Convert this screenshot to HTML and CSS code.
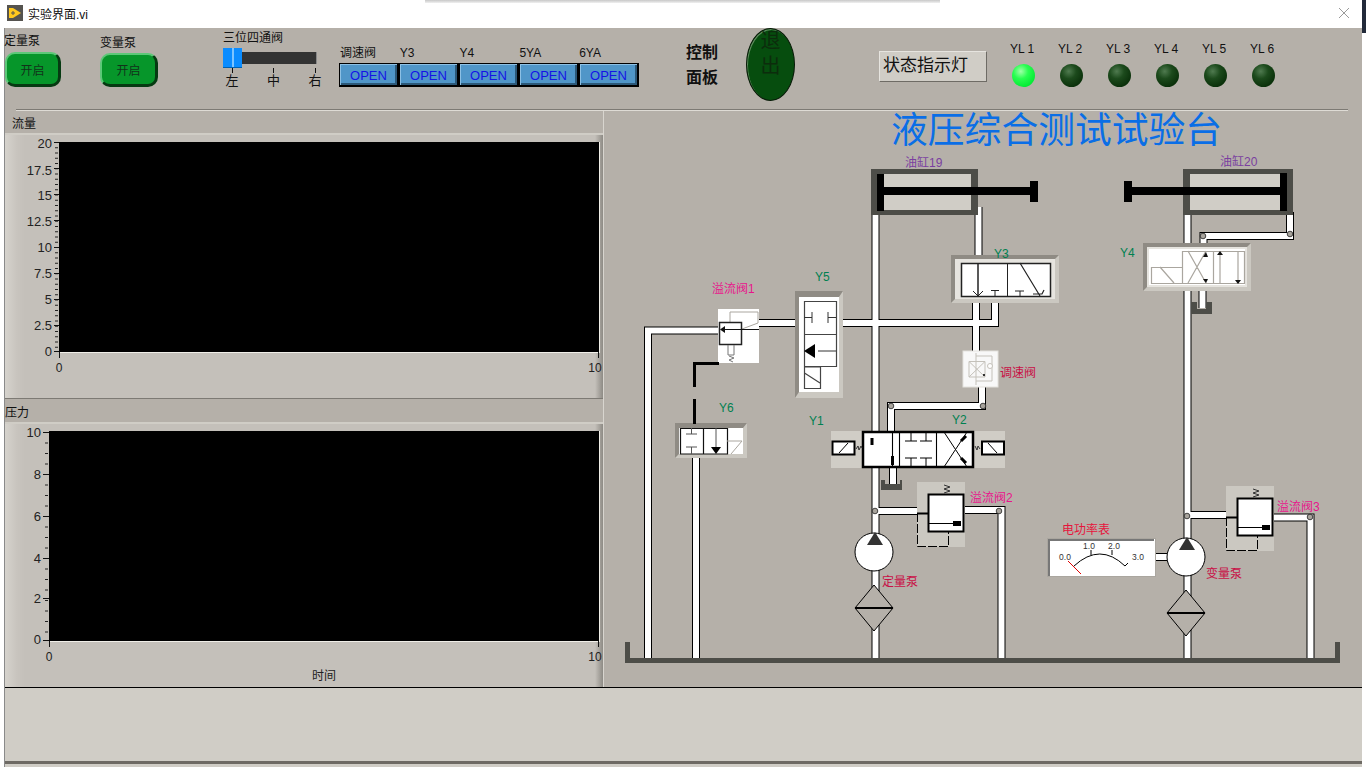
FILE: index.html
```html
<!DOCTYPE html>
<html lang="zh">
<head>
<meta charset="utf-8">
<title>实验界面.vi</title>
<link rel="stylesheet" href="styles.css">
</head>
<body>
<div class="window">
  <div class="titlebar">
    <svg class="app-icon" width="16" height="16" viewBox="0 0 16 16"><rect width="16" height="16" fill="#55534f"/><path d="M2 3H6L14 8L6 13H2Z" fill="#ffc81e"/><path d="M4 8H8M6 6V10" stroke="#55534f" stroke-width="1"/></svg>
    <span class="title-text">实验界面.vi</span>
    <svg class="close-icon" width="10" height="10" viewBox="0 0 10 10"><path d="M0 0L10 10M10 0L0 10" stroke="#9a9a9a" stroke-width="1"/></svg>
  </div>
  <div class="menu-shadow"></div>
  <div class="edge-corner"></div>

  <main class="vi">
    <section class="toolbar">
      <div class="toolrow">
        <div class="pump pump-a">
          <div class="lbl">定量泵</div>
          <button class="green-btn">开启</button>
        </div>
        <div class="pump pump-b">
          <div class="lbl">变量泵</div>
          <button class="green-btn">开启</button>
        </div>
        <div class="slider-group">
          <div class="lbl">三位四通阀</div>
          <div class="slider"><div class="thumb"></div><div class="track"></div></div>
          <div class="ticks"><span>左</span><span>中</span><span>右</span></div>
        </div>
        <div class="valves">
          <div class="valve-labels"><span>调速阀</span><span>Y3</span><span>Y4</span><span>5YA</span><span>6YA</span></div>
          <div class="valve-btns"><button>OPEN</button><button>OPEN</button><button>OPEN</button><button>OPEN</button><button>OPEN</button></div>
        </div>
        <div class="panel-name">控制<br>面板</div>
        <button class="exit-btn">退<br>出</button>
        <div class="status-box">状态指示灯</div>
        <div class="leds">
          <div class="led-cell"><span>YL 1</span><i class="led on"></i></div>
          <div class="led-cell"><span>YL 2</span><i class="led"></i></div>
          <div class="led-cell"><span>YL 3</span><i class="led"></i></div>
          <div class="led-cell"><span>YL 4</span><i class="led"></i></div>
          <div class="led-cell"><span>YL 5</span><i class="led"></i></div>
          <div class="led-cell"><span>YL 6</span><i class="led"></i></div>
        </div>
      </div>
      <div class="separator"></div>
    </section>

    <section class="workspace">
      <div class="charts">
        <div class="chart chart-a">
          <div class="chart-title title-a">流量</div>
          <svg class="chart-body" width="598" height="263" viewBox="5 135 598 263">
            <rect x="59" y="142" width="541" height="211" fill="#f0eee8"/>
            <rect x="59" y="142" width="540" height="210" fill="#000"/>
            <line x1="56.5" y1="142" x2="56.5" y2="352" class="minor" stroke-dasharray="1 4.25"/>
            <path class="major" d="M54 142.500H59M54 168.500H59M54 194.500H59M54 220.500H59M54 247.500H59M54 273.500H59M54 299.500H59M54 325.500H59M54 351.500H59"/>
            <g class="axis-y">
              <text x="52" y="148">20</text><text x="52" y="175">17.5</text><text x="52" y="200">15</text><text x="52" y="226">12.5</text><text x="52" y="252">10</text><text x="52" y="278">7.5</text><text x="52" y="304">5</text><text x="52" y="330">2.5</text><text x="52" y="356">0</text>
            </g>
            <path class="major" d="M59.500 352V358M598.500 352V358"/>
            <g class="axis-x"><text x="59" y="372">0</text><text x="595" y="372">10</text></g>
          </svg>
        </div>
        <div class="chart chart-b">
          <div class="chart-title title-b">压力</div>
          <svg class="chart-body" width="598" height="263" viewBox="5 424 598 263">
            <rect x="49" y="431" width="551" height="211" fill="#f0eee8"/>
            <rect x="49" y="431" width="550" height="210" fill="#000"/>
            <line x1="46.5" y1="432" x2="46.5" y2="640" class="minor" stroke-dasharray="1 9.5"/>
            <path class="major" d="M43 432.500H49M43 474.500H49M43 516.500H49M43 558.500H49M43 598.500H49M43 640.500H49"/>
            <g class="axis-y">
              <text x="41" y="437">10</text><text x="41" y="479">8</text><text x="41" y="521">6</text><text x="41" y="563">4</text><text x="41" y="603">2</text><text x="41" y="644">0</text>
            </g>
            <path class="major" d="M49.500 641V647M598.500 641V647"/>
            <g class="axis-x"><text x="49" y="661">0</text><text x="595" y="661">10</text><text x="324" y="680">时间</text></g>
          </svg>
        </div>
      </div>

      <svg class="diagram" width="758" height="576" viewBox="604 111 758 576">
        <defs>
          <g id="pipes">
            <path d="M875.5 212V660"/>
            <path d="M978.5 207V262"/>
            <path d="M976 297V356"/>
            <path d="M982 385V406H891V435"/>
            <path d="M893 465V484"/>
            <path d="M759 323H995V297"/>
            <path d="M720 330.500H648V660"/>
            <path d="M696 455V660"/>
            <path d="M1187.500 212V660"/>
            <path d="M1290 212V236H1203.500V245"/>
            <path d="M1202.500 288V308"/>
            <path d="M875 511H920"/>
            <path d="M960 510H1001.500V660"/>
            <path d="M1187 515H1230"/>
            <path d="M1270 517.500H1310.500V660"/>
            <path d="M1150 557H1170"/>
          </g>
          <g id="pump">
            <circle cx="0" cy="0" r="19" fill="#fff" stroke="#000"/>
            <path d="M1 -20L-7 -7H9Z" fill="#333"/>
          </g>
          <g id="filter">
            <path d="M0 -23L19 0L0 23L-19 0Z" fill="#b5b0a9" stroke="#000"/>
            <path d="M-19 0H19" stroke="#000" stroke-width="2"/>
          </g>
          <g id="relief">
            <rect x="0" y="0" width="48" height="65" fill="#cbc8c1"/>
            <rect x="11.500" y="12.500" width="35" height="37" fill="#fff" stroke="#000" stroke-width="2"/>
            <path d="M12 41.500H44" stroke="#000"/>
            <path d="M36 39H44V44H36Z" fill="#000"/>
            <path d="M0 31.500H11" stroke="#000" stroke-width="2"/>
            <path d="M0.500 31V64.500H31.500V50" fill="none" stroke="#000" stroke-dasharray="9 2"/>
            <path d="M27 3L33 5L27 7L33 9L27 11" fill="none" stroke="#333"/>
          </g>
        </defs>

        <use href="#pipes" class="pipe-edge"/>
        <use href="#pipes" class="pipe-core"/>

        <text class="title-big" x="891" y="143">液压综合测试试验台</text>

        <!-- cylinder 19 -->
        <rect x="871" y="169" width="107" height="46" fill="#4d4d48"/>
        <rect x="884" y="174" width="87" height="36" fill="#d0cdc6"/>
        <rect x="877" y="174" width="7" height="37" fill="#000"/>
        <rect x="884" y="187" width="147" height="8" fill="#000"/>
        <rect x="1030" y="181" width="8" height="21" fill="#000"/>
        <!-- cylinder 20 -->
        <rect x="1183" y="169" width="110" height="46" fill="#4d4d48"/>
        <rect x="1190" y="174" width="90" height="36" fill="#d0cdc6"/>
        <rect x="1280" y="173" width="7" height="38" fill="#000"/>
        <rect x="1131" y="187" width="150" height="8" fill="#000"/>
        <rect x="1124" y="181" width="8" height="21" fill="#000"/>

        <!-- Y3 -->
        <rect x="951" y="255" width="108" height="48" fill="#cbc8c1"/>
        <path d="M951 255H1059L1055 259H955V299L951 303Z" fill="#8f8b84"/>
        <rect x="955" y="259" width="100" height="40" fill="#e6e4df"/>
        <rect x="961.500" y="263.500" width="89" height="33" fill="#fff" stroke="#222" stroke-width="1.500"/>
        <path d="M1007.500 263V297" stroke="#222"/>
        <path d="M978 263V296" stroke="#222" stroke-width="1.500"/>
        <path d="M973 291L978 296L983 291M991 290.500H999M995 290.500V297M1015 291H1024M1020 291V297" fill="none" stroke="#222"/>
        <path d="M1020 263L1040 296M1033 294H1042L1044 290" fill="none" stroke="#222" stroke-width="1.200"/>

        <!-- Y4 -->
        <rect x="1143" y="243" width="108" height="48" fill="#cbc8c1"/>
        <path d="M1143 243H1251L1247 247H1147V287L1143 291Z" fill="#8f8b84"/>
        <rect x="1147" y="247" width="100" height="40" fill="#e6e4df"/>
        <rect x="1149" y="249" width="96" height="36" fill="#fff"/>
        <path d="M1151.500 267.500H1182.500V283.500H1151.500ZM1182.500 251.500H1244.500V283.500H1182.500ZM1213.500 251.500V283.500M1160 267L1174 283M1188 251L1206 283M1206 251L1188 283M1220 252V283M1238 252V283" fill="none" stroke="#aaa69f" stroke-width="1.200"/>
        <path d="M1206 252L1203 257H1208ZM1206 283L1203 279H1208ZM1220 251L1217 255H1223ZM1238 284L1235 280H1241Z" fill="#111"/>

        <!-- tank Y4 -->
        <path d="M1191 302H1197V309H1206V302H1212V314H1191Z" fill="#4d4d48"/>

        <!-- relief 1 -->
        <rect x="718" y="309" width="41" height="54" fill="#fff"/>
        <path d="M730 322V312H758V323L742 329" fill="none" stroke="#aaa69f"/>
        <rect x="719.500" y="322.500" width="22" height="22" fill="#fff" stroke="#222" stroke-width="1.500"/>
        <path d="M722 329.500H759" stroke="#111" stroke-width="1.200"/>
        <path d="M720 329.500L725 326V333Z" fill="#111"/>
        <path d="M728 345V355M734 345V355M728 355H734M729 356L734 358L729 360L733 362" fill="none" stroke="#777" />

        <!-- Y5 -->
        <rect x="795" y="291" width="48" height="107" fill="#cbc8c1"/>
        <path d="M795 291H843L839 297H799V392L795 398Z" fill="#8f8b84"/>
        <rect x="799" y="297" width="40" height="95" fill="#fff"/>
        <path d="M804.500 301.500H836.500V366.500H804.500ZM804.500 334.500H836.500M804.500 367H820.500V388.500H804.500V367M804.500 373L820 383" fill="none" stroke="#444" stroke-width="1.200"/>
        <path d="M804 317.500H812M812 312V323M828 317.500H836M828 312V323M818 351H836" fill="none" stroke="#333"/>
        <path d="M804 351L815 344V358Z" fill="#000"/>

        <!-- Y6 -->
        <rect x="675" y="423" width="72" height="35" fill="#cbc8c1"/>
        <path d="M675 423H747L743 428H679V454L675 458Z" fill="#8f8b84"/>
        <rect x="679" y="428" width="64" height="26" fill="#fff"/>
        <path d="M680.500 428.500H727.500V454H680.500ZM703.500 428V454" fill="none" stroke="#111" stroke-width="1.200"/>
        <path d="M727 441H742M742 441L731 454" fill="none" stroke="#aaa69f"/>
        <path d="M686 434H697M691.500 428V434M686 447H697M691.500 447V454M716 428V448" fill="none" stroke="#555"/>
        <path d="M711 447H721L716 454Z" fill="#000"/>

        <!-- dashed pilot -->
        <path d="M719 363.500H694.500V387M694.500 399V424" fill="none" stroke="#000" stroke-width="3"/>

        <!-- speed valve -->
        <rect x="963" y="351" width="35" height="36" fill="#f8f8f8" stroke="#e4e2dd"/>
        <path d="M976 353V385M976 356H992V381H976M969 361.500H985V377H969ZM969 361.500L985 377M985 361.500L969 377" fill="none" stroke="#c4c1ba"/>
        <circle cx="990" cy="366" r="2.500" fill="#fff" stroke="#c4c1ba"/>
        <rect x="983" y="374" width="2" height="2" fill="#333"/>

        <!-- centre valve -->
        <rect x="831" y="431" width="174" height="37" fill="#d0cdc6"/>
        <rect x="863" y="432" width="110" height="35" fill="#fff" stroke="#000" stroke-width="2.500"/>
        <path d="M892.500 432V467M899.500 432V467M936.500 432V467" fill="none" stroke="#000" stroke-width="1.100"/>
        <path d="M872 438V445M892.500 456V465" stroke="#000" stroke-width="3"/>
        <path d="M905 441H917M911 432V441M920 441H932M926 432V441M905 458H917M911 458V467M920 458H932M926 458V467" fill="none" stroke="#000"/>
        <path d="M944 432L967 467M967 432L944 467" fill="none" stroke="#000"/>
        <path d="M961 441L966 436M961 458L966 463" stroke="#000" stroke-width="3"/>
        <rect x="832.500" y="441.500" width="22" height="13" fill="#fff" stroke="#000" stroke-width="2"/>
        <path d="M839 453L848 443" stroke="#000"/>
        <path d="M856 449L858 446L859 450L861 446L862 448" fill="none" stroke="#333"/>
        <rect x="982" y="441.500" width="22" height="13" fill="#fff" stroke="#000" stroke-width="2"/>
        <path d="M988 443L997 453" stroke="#000"/>
        <path d="M975 446L977 450L978 446L980 449" fill="none" stroke="#333"/>
        <path d="M881 480H885V484H900V480H902V490H881Z" fill="#4d4d48"/>

        <use href="#relief" x="917" y="482"/>
        <use href="#relief" x="1226" y="486"/>

        <use href="#pump" x="874" y="552"/>
        <use href="#pump" x="1186" y="557"/>
        <use href="#filter" x="874" y="608"/>
        <use href="#filter" x="1186" y="613"/>

        <g class="junction">
          <circle cx="891" cy="406" r="2.800"/><circle cx="983" cy="406" r="2.800"/>
          <circle cx="875" cy="511" r="2.800"/><circle cx="999" cy="511" r="2.800"/>
          <circle cx="1187" cy="516" r="2.800"/><circle cx="1310" cy="517" r="2.800"/>
          <circle cx="1290" cy="234" r="2.800"/><circle cx="1203" cy="236" r="2.800"/>
        </g>

        <!-- tank -->
        <path d="M625 642H630V658H1335V642H1340V663H625Z" fill="#4d4d48"/>

        <!-- meter -->
        <rect x="1047.500" y="538.500" width="108" height="38" fill="#fff" stroke="#aaa69f"/>
        <path d="M1049 576V540H1154" fill="none" stroke="#777" stroke-width="2"/>
        <path d="M1074 566Q1100 542 1125 566L1128 563M1091 555V550M1112 555V550" fill="none" stroke="#000"/>
        <path d="M1068 561L1081 574" stroke="#e00000"/>
        <g class="meter-num"><text x="1065" y="560">0.0</text><text x="1089" y="549">1.0</text><text x="1114" y="549">2.0</text><text x="1138" y="560">3.0</text></g>

        <text class="t purple" x="905" y="167">油缸19</text>
        <text class="t purple" x="1220" y="166">油缸20</text>
        <text class="t green" x="994" y="258">Y3</text>
        <text class="t green" x="1120" y="257">Y4</text>
        <text class="t green" x="815" y="281">Y5</text>
        <text class="t green" x="719" y="412">Y6</text>
        <text class="t green" x="809" y="425">Y1</text>
        <text class="t green" x="952" y="424">Y2</text>
        <text class="t pink" x="712" y="293">溢流阀1</text>
        <text class="t pink" x="970" y="502">溢流阀2</text>
        <text class="t pink" x="1277" y="511">溢流阀3</text>
        <text class="t crimson" x="1000" y="377">调速阀</text>
        <text class="t crimson" x="882" y="586">定量泵</text>
        <text class="t crimson" x="1206" y="578">变量泵</text>
        <text class="t red" x="1062" y="534">电功率表</text>
      </svg>
    </section>

    <section class="footer-area"></section>
  </main>
</div>
</body>
</html>
```

FILE: styles.css
```css
* { box-sizing: border-box; }

html, body {
  margin: 0;
  height: 100%;
  background: #fff;
  overflow: hidden;
}

body {
  font-family: "Liberation Sans", "Noto Sans CJK SC", sans-serif;
  font-size: 12px;
  color: #111;
}

.window {
  position: relative;
  width: 1366px;
  height: 768px;
}

.titlebar {
  height: 28px;
  display: flex;
  align-items: center;
  padding: 0 17px 2px 7px;
  background: #fff;
}

.app-icon { flex: none; }

.title-text {
  margin-left: 5px;
  font-size: 12px;
  color: #111;
}

.close-icon { margin-left: auto; }

.menu-shadow {
  position: absolute;
  left: 425px;
  top: 0;
  width: 515px;
  height: 3px;
  background: linear-gradient(#c8c8c8, #f0f0f0);
}

.edge-corner {
  position: absolute;
  right: 0;
  top: 0;
  width: 4px;
  height: 33px;
  background: #222a3a;
}

.vi {
  margin-left: 4px;
  width: 1358px;
  height: 739px;
  border-left: 1px solid #8a8a8a;
  display: flex;
  flex-direction: column;
  background: #d0cdc6;
}

.toolbar {
  height: 83px;
  background: #b5b0a9;
  flex: none;
}

.toolrow {
  height: 81px;
  display: flex;
  align-items: flex-start;
  margin-left: -1px;
}

.separator {
  height: 2px;
  margin: 0 14px 0 11px;
  background: linear-gradient(#7d7a74 50%, #dedbd5 50%);
}

.lbl { line-height: 14px; white-space: nowrap; }

button { font-family: inherit; padding: 0; cursor: default; }

.green-btn {
  display: block;
  height: 35px;
  border-radius: 10px;
  border-style: solid;
  border-width: 2px 3px 3px 2px;
  border-color: #5cc878 #063a12 #063a12 #5cc878;
  background: #06962a;
  color: #12321a;
  font-size: 12px;
}

.pump-a { width: 57px; padding-top: 6px; }
.pump-a .green-btn { width: 56px; margin: 4px 0 0 1px; }
.pump-b { width: 58px; margin-left: 39px; padding-top: 8px; }
.pump-b .green-btn { width: 58px; height: 34px; margin-top: 3px; }

.slider-group { width: 94px; margin-left: 65px; padding-top: 3px; }

.slider {
  display: flex;
  align-items: center;
  height: 20px;
  margin-top: 3px;
}

.thumb {
  width: 19px;
  height: 20px;
  background: linear-gradient(90deg, #0a8cff 0 46%, #7cc4ff 46% 56%, #0a8cff 56%);
  border-bottom: 1px solid #0060b0;
}

.track {
  width: 75px;
  height: 12px;
  background: #333;
  border-right: 1px solid #888;
}

.ticks {
  display: flex;
  justify-content: space-between;
  width: 97px;
  margin-left: 2px;
}

.ticks span {
  display: flex;
  flex-direction: column;
  align-items: center;
  width: 14px;
  font-size: 13px;
  line-height: 15px;
  color: #111;
}

.ticks span::before {
  content: "";
  width: 1px;
  height: 5px;
  background: #111;
}

.valves { width: 300px; margin-left: 22px; padding-top: 18px; }

.valve-labels { display: flex; height: 15px; padding-left: 1px; line-height: 14px; }
.valve-labels span { width: 60px; }

.valve-btns { display: flex; margin-top: 2px; }

.valve-btns button {
  width: 60px;
  height: 24px;
  padding-top: 1px;
  border-style: solid;
  border-width: 1px 2px 2px 1px;
  border-color: #000;
  box-shadow: inset 1px 1px 0 #8cc0e4, inset -2px -2px 0 #2c5878;
  background: #5096c8;
  color: #1414e6;
  font-size: 13px;
}

.panel-name {
  width: 34px;
  margin-left: 47px;
  padding-top: 12px;
  font-size: 16px;
  font-weight: 700;
  line-height: 25px;
  color: #111;
}

.exit-btn {
  width: 49px;
  height: 73px;
  margin-left: 26px;
  padding-bottom: 21px;
  border: 1px solid #081a08;
  border-radius: 50%;
  box-shadow: inset 1px 1px 0 #5c8a5c;
  background: #064d0e;
  color: #0c2c0c;
  font-size: 20px;
  line-height: 25px;
}

.status-box {
  width: 108px;
  height: 31px;
  margin: 23px 0 0 84px;
  padding-left: 3px;
  border: 1px solid;
  border-color: #e6e4df #6e6b65 #6e6b65 #e6e4df;
  background: #d0cdc6;
  font-size: 17px;
  line-height: 27px;
  white-space: nowrap;
}

.leds { display: flex; margin-left: 12px; }

.led-cell {
  width: 48px;
  padding-top: 14px;
  display: flex;
  flex-direction: column;
  align-items: center;
  line-height: 14px;
}

.led-cell span { margin-right: 2px; }

.led {
  width: 23px;
  height: 23px;
  margin-top: 8px;
  border-radius: 50%;
  background: radial-gradient(circle at 38% 32%, #4f7a4f 0, #1c4a1c 35%, #0a300a 75%, #2c3a2c 100%);
}

.led.on {
  background: radial-gradient(circle at 38% 32%, #a0ffa8 0, #28ff50 35%, #00e832 80%, #0aa02a 100%);
}

.workspace {
  height: 577px;
  display: flex;
  flex: none;
  background: #b5b0a9;
  border-bottom: 1px solid #000;
}

.charts {
  width: 599px;
  display: flex;
  flex-direction: column;
  flex: none;
  border-right: 1px solid #d8d5cf;
}

.chart { flex: none; background: #c4c0ba; }
.chart-a { height: 288px; border-bottom: 1px solid #7d7a74; }
.chart-b { height: 288px; border-bottom: 1px solid #7d7a74; }

.chart-title {
  height: 24px;
  background: #b5b0a9;
  border-bottom: 2px solid #d0cdc6;
  line-height: 26px;
}

.title-a { padding-left: 7px; }
.title-b { height: 25px; padding-top: 1px; }

.chart-body {
  display: block;
  background: linear-gradient(90deg, #d6d3cd 0, #c8c4be 12px, #c4c0ba 20px, #c4c0ba 590px, #8e8b85 598px);
}

.minor { stroke: #222; stroke-width: 3; }
.major { fill: none; stroke: #111; stroke-width: 1; }

.axis-y text {
  font-size: 13px;
  text-anchor: end;
  fill: #222;
}

.axis-x text {
  font-size: 12px;
  text-anchor: middle;
  fill: #222;
}

.diagram { display: block; flex: none; overflow: visible; }

.pipe-edge { fill: none; stroke: #000; stroke-width: 8; }
.pipe-core { fill: none; stroke: #fff; stroke-width: 6; }

.junction circle { fill: #a8a49d; stroke: #222; stroke-width: 0.8; }

.title-big {
  font-family: "Noto Sans CJK SC", sans-serif;
  font-size: 36.8px;
  fill: #0a6ee6;
}

.t { font-size: 12px; }
.purple { fill: #7a3fa0; }
.green { fill: #008050; }
.pink { fill: #e8148c; }
.crimson { fill: #c80f46; }
.red { fill: #e6143c; }

.meter-num text { font-size: 8.5px; fill: #333; text-anchor: middle; }

.footer-area {
  flex: none;
  height: 76px;
  background: #d0cdc6;
  border-bottom: 3px solid #6e6a64;
}
```
